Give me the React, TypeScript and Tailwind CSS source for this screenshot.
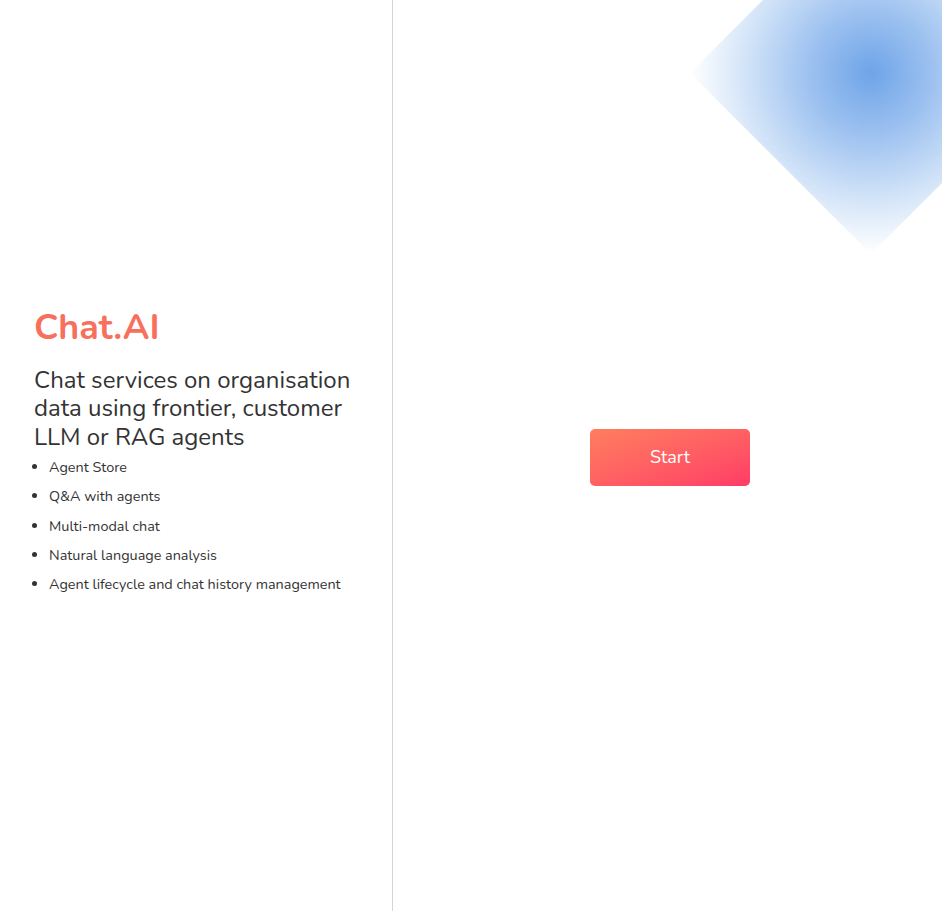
import React from "react";

export default function App() {
  const items = [
    "Agent Store",
    "Q&A with agents",
    "Multi-modal chat",
    "Natural language analysis",
    "Agent lifecycle and chat history management",
  ];
  return (
    <div
      className="flex h-[911px] w-full overflow-hidden bg-white"
      style={{ fontFamily: "Nunito, Lato, 'Noto Sans', sans-serif" }}
    >
      <div className="flex h-full w-[393px] shrink-0 flex-col justify-center border-r border-[#d4d4d4] pl-[34px] pr-4">
        <h1 className="text-[35.8px] font-bold leading-[40px] text-[#f7705d]">Chat.AI</h1>
        <p className="mt-[18px] text-[24px] leading-[28.5px] text-[#333]">
          Chat services on organisation data using frontier, customer LLM or RAG agents
        </p>
        <ul className="mt-[6px] list-disc pl-[15px] text-[14.4px] leading-[20px] text-[#333]">
          {items.map((t) => (
            <li key={t} className="mb-[9.3px] pl-0">
              {t}
            </li>
          ))}
        </ul>
      </div>
      <div className="relative flex flex-1 items-center justify-center">
        <div
          className="pointer-events-none absolute left-[350px] top-[-55px] h-[256px] w-[256px] rotate-45 rounded-[6px]"
          style={{
            background:
              "radial-gradient(circle at center, #6ea4e8 0%, #9ec2f0 35%, #d3e4f8 70%, #ffffff 100%)",
          }}
        />
        <button className="relative ml-[5px] mt-[4px] h-[57px] w-[160px] rounded-[5px] bg-gradient-to-br from-[#ff7d5e] to-[#ff3a66] text-[18px] text-white">
          Start
        </button>
      </div>
    </div>
  );
}
